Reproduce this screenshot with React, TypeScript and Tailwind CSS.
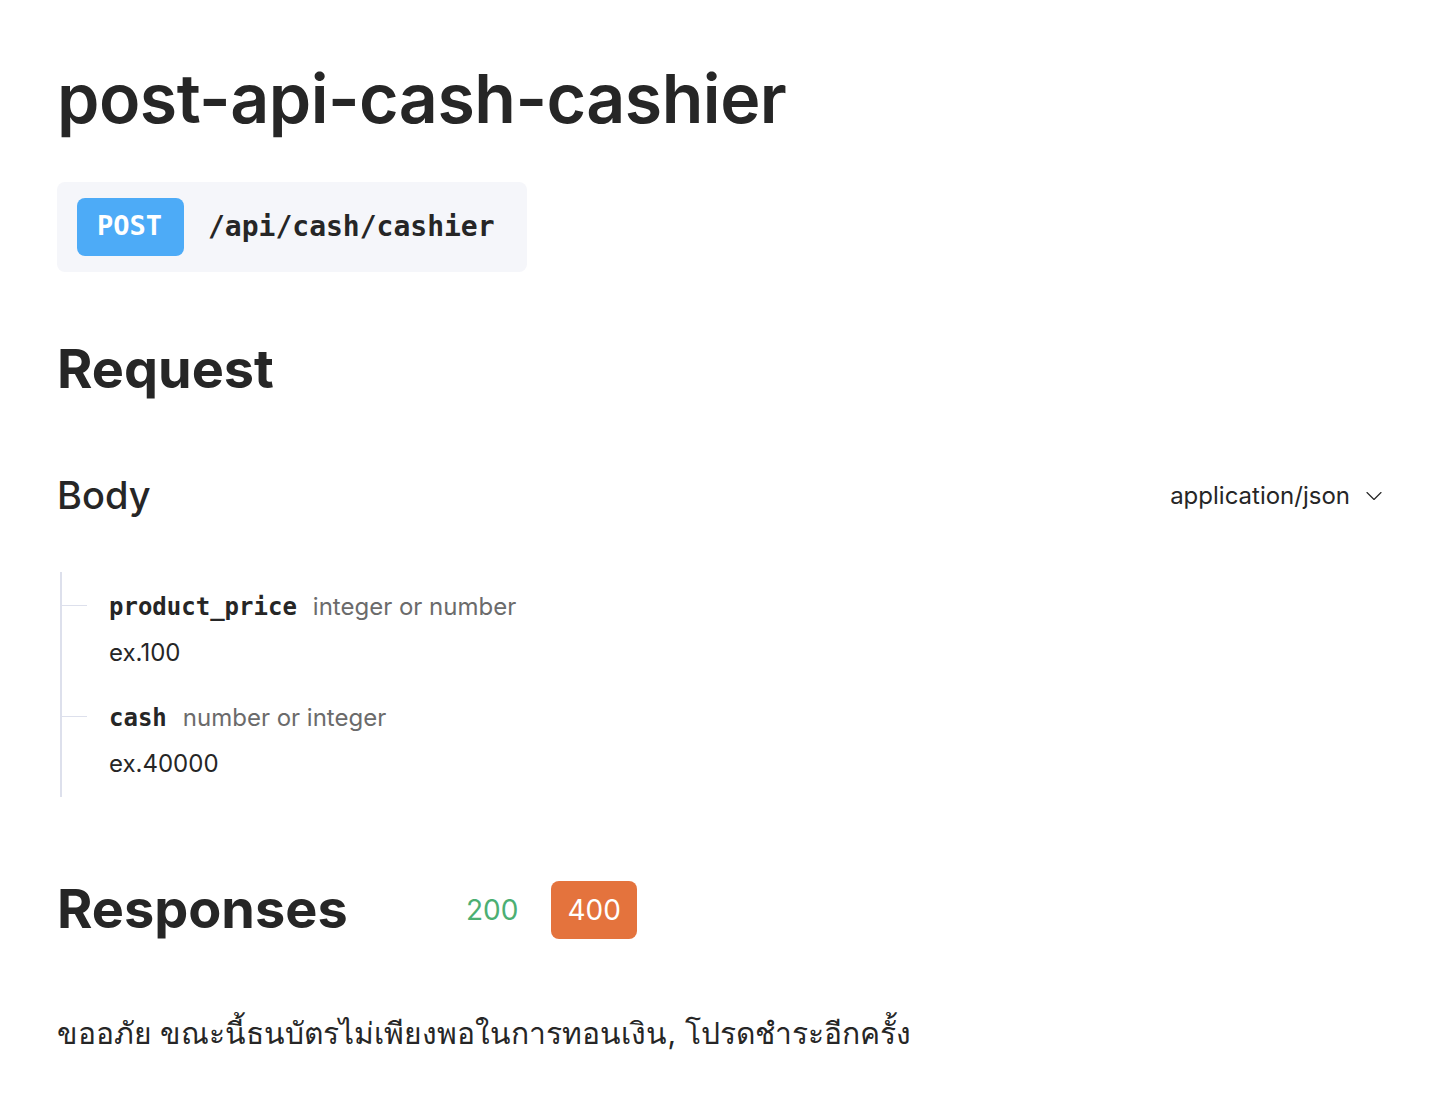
import { ChevronDown } from 'lucide-react'

const sans = "font-['Inter','Noto_Sans',sans-serif]"
const mono = "font-['DejaVu_Sans_Mono','Liberation_Mono',monospace]"

interface FieldProps {
    name : string
    type : string
    example : string
}

function Field({ name, type, example } : FieldProps) {
    return (
        <div className="relative pl-[47px]">
            {/* 가지 선 */}
            <div className="absolute left-0 top-[33px] w-[25px] h-px bg-[#dde0ec]"></div>
            <div className="flex items-baseline gap-4 pt-[17px]">
                <span className={`${mono} font-bold text-[24px] text-[#262626]`}>{ name }</span>
                <span className="text-[24px] text-[#6b6b6b]">{ type }</span>
            </div>
            <div className="text-[24px] text-[#262626] mt-[10px] pb-[12px]">{ example }</div>
        </div>
    )
}

export default function App() {
    return (
        <div className={`${sans} min-h-screen bg-white text-[#262626] px-[57px] pt-[58px] pb-20`}>
            <h1 className="text-[68px] font-semibold leading-[1.2] tracking-[-0.5px]">post-api-cash-cashier</h1>

            {/* 엔드포인트 */}
            <div className="mt-[42px] inline-flex items-center gap-[24px] bg-[#f5f6fa] rounded-lg px-5 py-4 w-[470px]">
                <span className={`${mono} font-bold text-[27px] text-white bg-[#4dabf7] rounded-lg px-5 w-[107px] h-[58px] flex items-center`}>POST</span>
                <span className={`${mono} font-bold text-[28px] text-[#262626]`}>/api/cash/cashier</span>
            </div>

            <h2 className="mt-[65px] text-[54px] font-bold leading-[1.2]">Request</h2>

            <div className="mt-[66px] flex items-center justify-between pr-[10px]">
                <h3 className="text-[38px] font-medium">Body</h3>
                <div className="flex items-center gap-[10px] text-[24px]">
                    application/json
                    <ChevronDown size={28} strokeWidth={1} className="-mr-[7px]" />
                </div>
            </div>

            {/* 필드 목록 */}
            <div className="mt-[48px] ml-[3px] border-l-2 border-[#dde0ec] pb-[3px]">
                <Field name="product_price" type="integer or number" example="ex.100" />
                <Field name="cash" type="number or integer" example="ex.40000" />
            </div>

            <div className="mt-[80px] flex items-center">
                <h2 className="text-[54px] font-bold leading-[1.2] w-[409px]">Responses</h2>
                <span className="text-[28px] text-[#4caf73]">200</span>
                <span className="ml-[33px] text-[28px] text-white bg-[#e4733d] rounded-lg h-[58px] px-4 flex items-center">400</span>
            </div>

            <p className="mt-[69px] text-[30px]">ขออภัย ขณะนี้ธนบัตรไม่เพียงพอในการทอนเงิน, โปรดชำระอีกครั้ง</p>
        </div>
    )
}
